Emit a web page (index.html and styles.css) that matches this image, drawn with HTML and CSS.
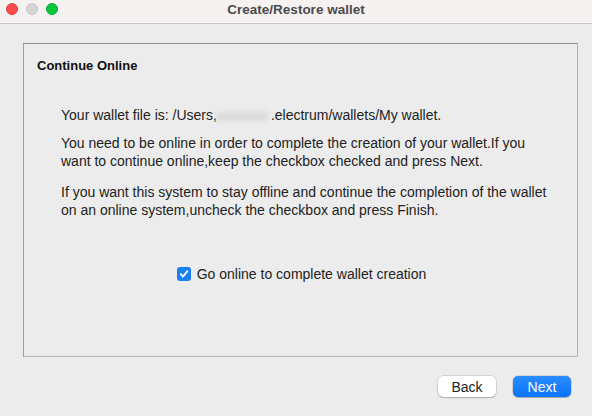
FILE: index.html
```html
<!DOCTYPE html>
<html lang="en">
<head>
    <meta charset="UTF-8">
    <title>Create/Restore wallet</title>
    <link rel="stylesheet" href="styles.css">
</head>
<body>
<div class="titlebar">
    <div class="lights">
        <span class="light red"></span>
        <span class="light grey"></span>
        <span class="light green"></span>
    </div>
    <div class="title">Create/Restore wallet</div>
</div>

<div class="content">
    <div class="frame">
        <h2>Continue Online</h2>
        <div class="text">
            <p class="first">Your wallet file is: /Users,<span class="blurred"></span>.electrum/wallets/My wallet.</p>
            <p>You need to be online in order to complete the creation of your wallet.If you<br>want to continue online,keep the checkbox checked and press Next.</p>
            <p>If you want this system to stay offline and continue the completion of the wallet<br>on an online system,uncheck the checkbox and press Finish.</p>
        </div>
        <label class="check">
            <span class="box">
                <svg width="10" height="10" viewBox="0 0 10 10"><path d="M1.8 5.2 L4 7.6 L8.3 2.2" fill="none" stroke="#fff" stroke-width="1.8" stroke-linecap="round" stroke-linejoin="round"/></svg>
            </span>
            Go online to complete wallet creation
        </label>
    </div>
    <div class="buttons">
        <button class="btn">Back</button>
        <button class="btn primary">Next</button>
    </div>
</div>
</body>
</html>
```

FILE: styles.css
```css
body {
    margin: 0;
    background-color: #ececec;
    font-family: "Liberation Sans", Arial, sans-serif;
    font-size: 14px;
    color: #222;
    width: 592px;
    height: 416px;
    overflow: hidden;
}
.titlebar {
    position: relative;
    height: 23px;
    background-color: #f6f2f2;
    border-bottom: 1px solid #c9c7c7;
    display: flex;
    align-items: center;
    justify-content: center;
}
.lights {
    position: absolute;
    left: 6px;
    top: 3px;
    display: flex;
    gap: 8px;
}
.light {
    width: 12px;
    height: 12px;
    border-radius: 50%;
    box-sizing: border-box;
}
.light.red { background-color: #fe4c4c; border: 1px solid #e33f3f; }
.light.grey { background-color: #d6d4d4; border: 1px solid #c4c2c2; }
.light.green { background-color: #0ac63c; border: 1px solid #06b032; }
.title {
    font-size: 13.5px;
    font-weight: bold;
    color: #4c4a4a;
    margin-top: -4px;
}
.content {
    padding: 19px 14px 0 23px;
}
.frame {
    height: 312px;
    border: 1px solid #b4b4b4;
    border-top-color: #8f8f8f;
    border-left-color: #9e9e9e;
    padding: 0 13px;
}
.frame h2 {
    font-size: 13px;
    font-weight: bold;
    color: #111;
    margin: 13px 0 0;
    line-height: 18px;
}
.text {
    padding-left: 24px;
    margin-top: 31px;
}
.text p {
    margin: 0 0 13px;
    line-height: 18px;
}
.text p.first {
    margin-bottom: 10px;
}
.blurred {
    display: inline-block;
    width: 50px;
    height: 9px;
    background-color: #dadada;
    filter: blur(2.5px);
    margin: 0 4px 0 0;
    vertical-align: middle;
}
.check {
    display: flex;
    align-items: center;
    justify-content: center;
    gap: 6px;
    margin-top: 47px;
    margin-left: 2px;
}
.box {
    width: 14px;
    height: 14px;
    border-radius: 3px;
    background-color: #1a7ef6;
    display: flex;
    align-items: center;
    justify-content: center;
}
.buttons {
    display: flex;
    justify-content: flex-end;
    gap: 17px;
    margin-top: 19px;
    margin-right: 7px;
}
.btn {
    font-family: "Liberation Sans", Arial, sans-serif;
    font-size: 14px;
    width: 58px;
    height: 21px;
    border: none;
    border-radius: 5px;
    background-color: #fff;
    color: #222;
    box-shadow: 0 0 0 0.5px rgba(0, 0, 0, 0.2), 0 1px 1px rgba(0, 0, 0, 0.2);
    padding: 0;
}
.btn.primary {
    background: linear-gradient(#2a8cfd, #0a74fa);
    color: #fff;
}
```
